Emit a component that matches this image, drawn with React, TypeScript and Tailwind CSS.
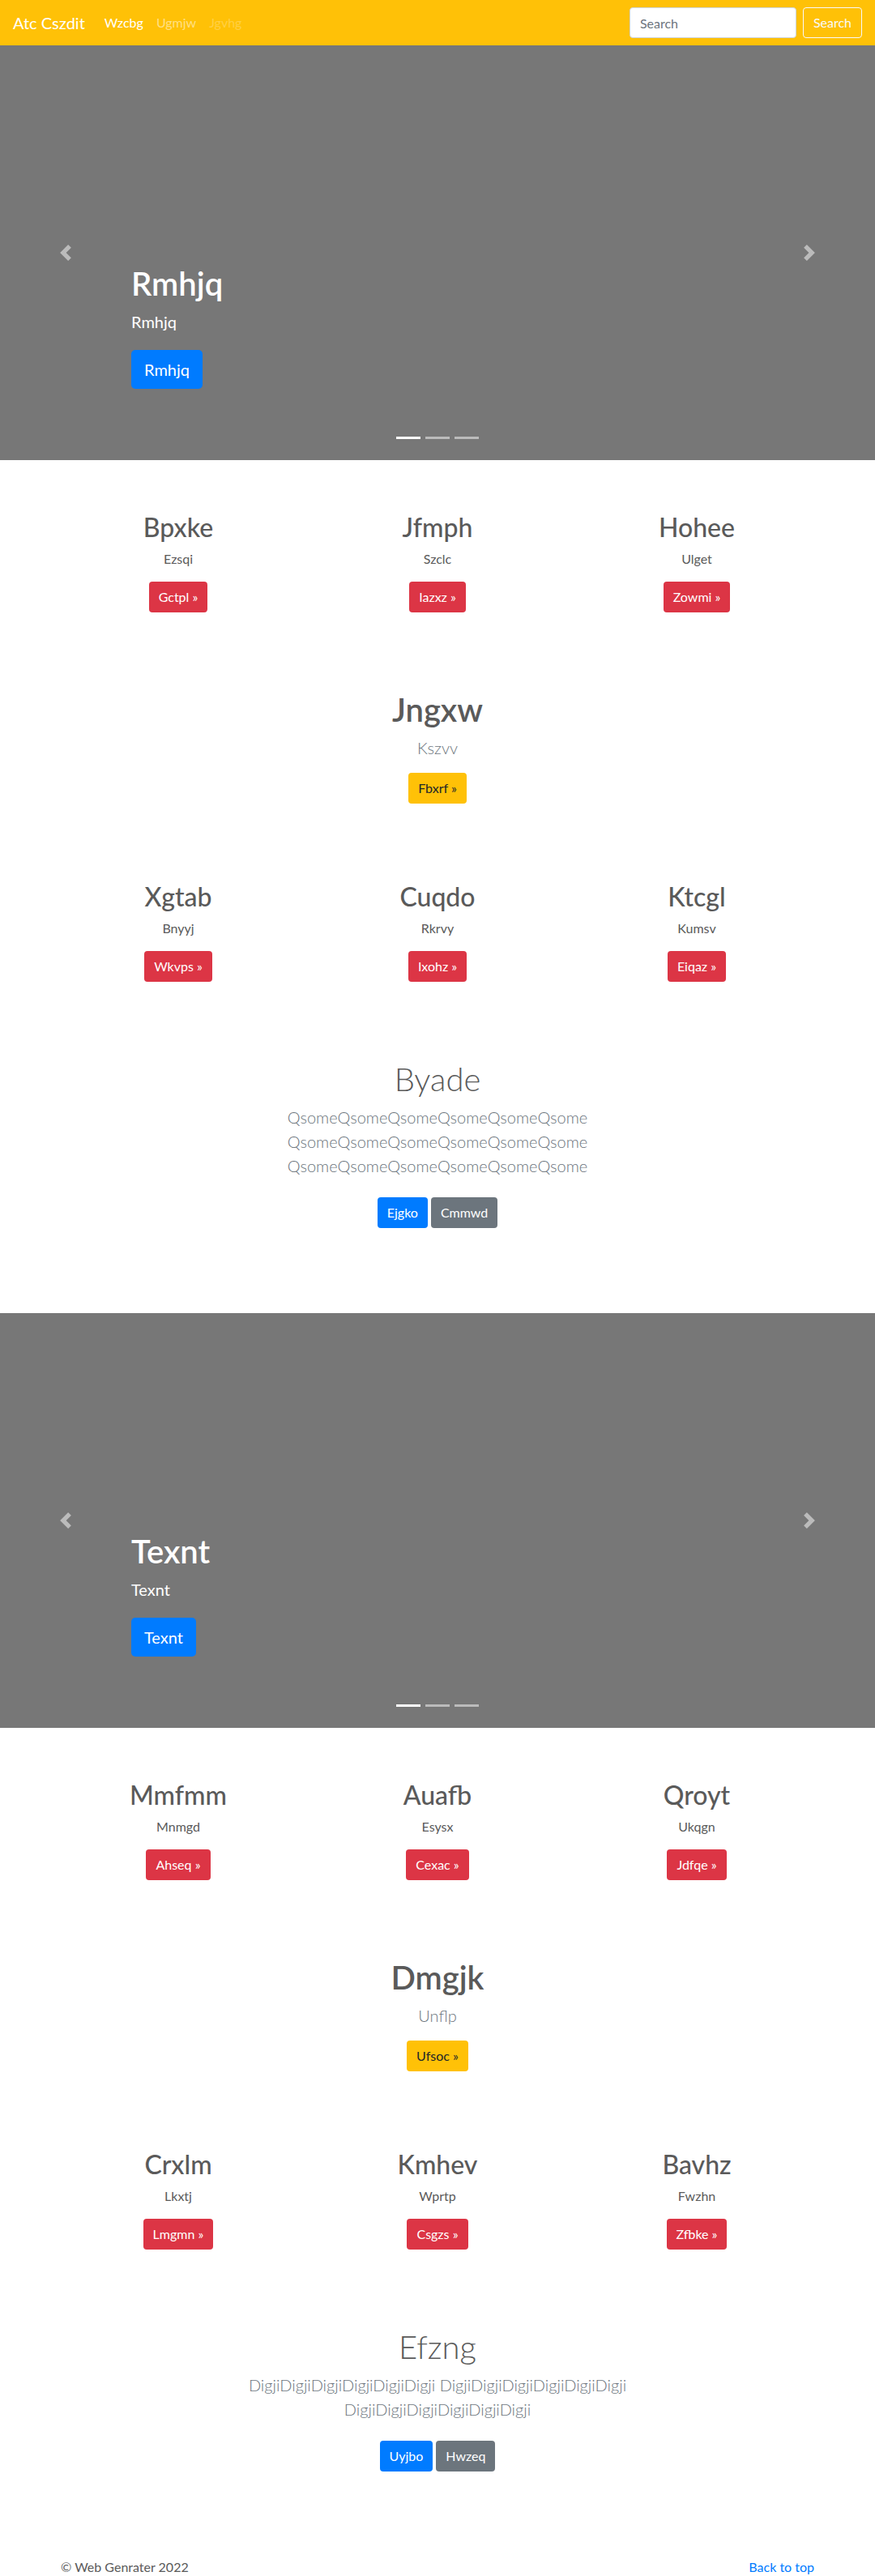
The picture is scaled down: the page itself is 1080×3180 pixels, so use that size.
import React from 'react'

type Feature = { title: string; text: string; action: string }

const rowOne: Feature[] = [
  { title: 'Bpxke', text: 'Ezsqi', action: 'Gctpl' },
  { title: 'Jfmph', text: 'Szclc', action: 'Iazxz' },
  { title: 'Hohee', text: 'Ulget', action: 'Zowmi' },
]

const rowTwo: Feature[] = [
  { title: 'Xgtab', text: 'Bnyyj', action: 'Wkvps' },
  { title: 'Cuqdo', text: 'Rkrvy', action: 'Ixohz' },
  { title: 'Ktcgl', text: 'Kumsv', action: 'Eiqaz' },
]

const rowThree: Feature[] = [
  { title: 'Mmfmm', text: 'Mnmgd', action: 'Ahseq' },
  { title: 'Auafb', text: 'Esysx', action: 'Cexac' },
  { title: 'Qroyt', text: 'Ukqgn', action: 'Jdfqe' },
]

const rowFour: Feature[] = [
  { title: 'Crxlm', text: 'Lkxtj', action: 'Lmgmn' },
  { title: 'Kmhev', text: 'Wprtp', action: 'Csgzs' },
  { title: 'Bavhz', text: 'Fwzhn', action: 'Zfbke' },
]

function Navbar() {
  return (
    <nav className="flex h-14 items-center bg-[#ffc107] px-4">
      <a className="mr-4 text-[20px] leading-[30px] text-white">Atc Cszdit</a>
      <ul className="flex text-base leading-6">
        <li className="px-2 text-white">Wzcbg</li>
        <li className="px-2 text-white/50">Ugmjw</li>
        <li className="px-2 text-white/25">Jgvhg</li>
      </ul>
      <form className="ml-auto flex items-center">
        <input
          placeholder="Search"
          className="h-[38px] w-[206px] rounded border border-[#ced4da] bg-white px-3 text-base text-[#495057] outline-none placeholder:text-[#6c757d]"
        />
        <button
          type="button"
          className="ml-2 h-[38px] rounded border border-[#f8f9fa] px-3 text-base text-[#f8f9fa]"
        >
          Search
        </button>
      </form>
    </nav>
  )
}

function Carousel({ title }: { title: string }) {
  return (
    <div className="relative flex h-[512px] items-end bg-[#777777]">
      <div className="pb-[88px] pl-[162px] text-white">
        <h1 className="mb-2 text-[40px] font-semibold leading-[48px]">{title}</h1>
        <p className="mb-5 text-[20px] leading-[30px]">{title}</p>
        <button className="h-12 rounded-[5px] bg-[#007bff] px-4 text-[20px] text-white">{title}</button>
      </div>

      {/* slide controls */}
      <div className="absolute bottom-0 left-0 top-0 flex w-[15%] items-center justify-center opacity-50">
        <svg width="20" height="20" viewBox="0 0 8 8" fill="#fff">
          <path d="M5.25 0l-4 4 4 4 1.5-1.5L4.25 4l2.5-2.5L5.25 0z" />
        </svg>
      </div>
      <div className="absolute bottom-0 right-0 top-0 flex w-[15%] items-center justify-center opacity-50">
        <svg width="20" height="20" viewBox="0 0 8 8" fill="#fff">
          <path d="M2.75 0l-1.5 1.5L3.75 4l-2.5 2.5L2.75 8l4-4-4-4z" />
        </svg>
      </div>

      {/* indicators */}
      <ol className="absolute bottom-[26px] left-0 right-0 flex justify-center gap-[6px]">
        <li className="h-[3px] w-[30px] bg-white" />
        <li className="h-[3px] w-[30px] bg-white opacity-50" />
        <li className="h-[3px] w-[30px] bg-white opacity-50" />
      </ol>
    </div>
  )
}

function FeatureRow({ items, first }: { items: Feature[]; first?: boolean }) {
  return (
    <div className={first ? 'mx-auto grid w-[960px] grid-cols-3 pt-16' : 'mx-auto grid w-[960px] grid-cols-3 pt-24'}>
      {items.map((item) => (
        <div key={item.title} className="px-[15px] text-center">
          <h2 className="mb-2 text-[32px] font-medium leading-[38px]">{item.title}</h2>
          <p className="mb-4 text-base leading-6">{item.text}</p>
          <button className="h-[38px] rounded bg-[#dc3545] px-3 text-base text-white">{item.action} »</button>
        </div>
      ))}
    </div>
  )
}

function Callout({ title, text, action }: Feature) {
  return (
    <div className="pt-24 text-center">
      <h1 className="mb-2 text-[40px] font-semibold leading-[48px]">{title}</h1>
      <p className="mb-4 text-[20px] font-light leading-[30px] text-[#6c757d]">{text}</p>
      <button className="h-[38px] rounded bg-[#ffc107] px-3 text-base text-[#212529]">{action} »</button>
    </div>
  )
}

function Jumbotron({ title, text, primary, secondary }: { title: string; text: string; primary: string; secondary: string }) {
  return (
    <div className="mx-auto w-[640px] px-[15px] pt-24 text-center">
      <h1 className="mb-2 text-[40px] font-light leading-[48px]">{title}</h1>
      <p className="mb-4 text-[20px] font-light leading-[30px] text-[#6c757d]">{text}</p>
      <div className="flex justify-center gap-1 pt-2">
        <button className="h-[38px] rounded bg-[#007bff] px-3 text-base text-white">{primary}</button>
        <button className="h-[38px] rounded bg-[#6c757d] px-3 text-base text-white">{secondary}</button>
      </div>
    </div>
  )
}

export default function App() {
  const qsome = 'QsomeQsomeQsomeQsomeQsomeQsome'
  const digji = 'DigjiDigjiDigjiDigjiDigjiDigji'

  return (
    <div className="min-h-[3180px] bg-white font-['Lato','Segoe_UI',sans-serif] text-[#5a5a5a]">
      <Navbar />

      <Carousel title="Rmhjq" />
      <FeatureRow items={rowOne} first />
      <Callout title="Jngxw" text="Kszvv" action="Fbxrf" />
      <FeatureRow items={rowTwo} />
      <Jumbotron title="Byade" text={`${qsome} ${qsome} ${qsome}`} primary="Ejgko" secondary="Cmmwd" />

      <div className="mt-[105px]">
        <Carousel title="Texnt" />
      </div>
      <FeatureRow items={rowThree} first />
      <Callout title="Dmgjk" text="Unflp" action="Ufsoc" />
      <FeatureRow items={rowFour} />
      <Jumbotron title="Efzng" text={`${digji} ${digji} ${digji}`} primary="Uyjbo" secondary="Hwzeq" />

      <footer className="mx-auto mt-[106px] flex w-[960px] justify-between px-[15px] pb-12 text-base leading-6">
        <p>© Web Genrater 2022</p>
        <a className="text-[#007bff]">Back to top</a>
      </footer>
    </div>
  )
}
